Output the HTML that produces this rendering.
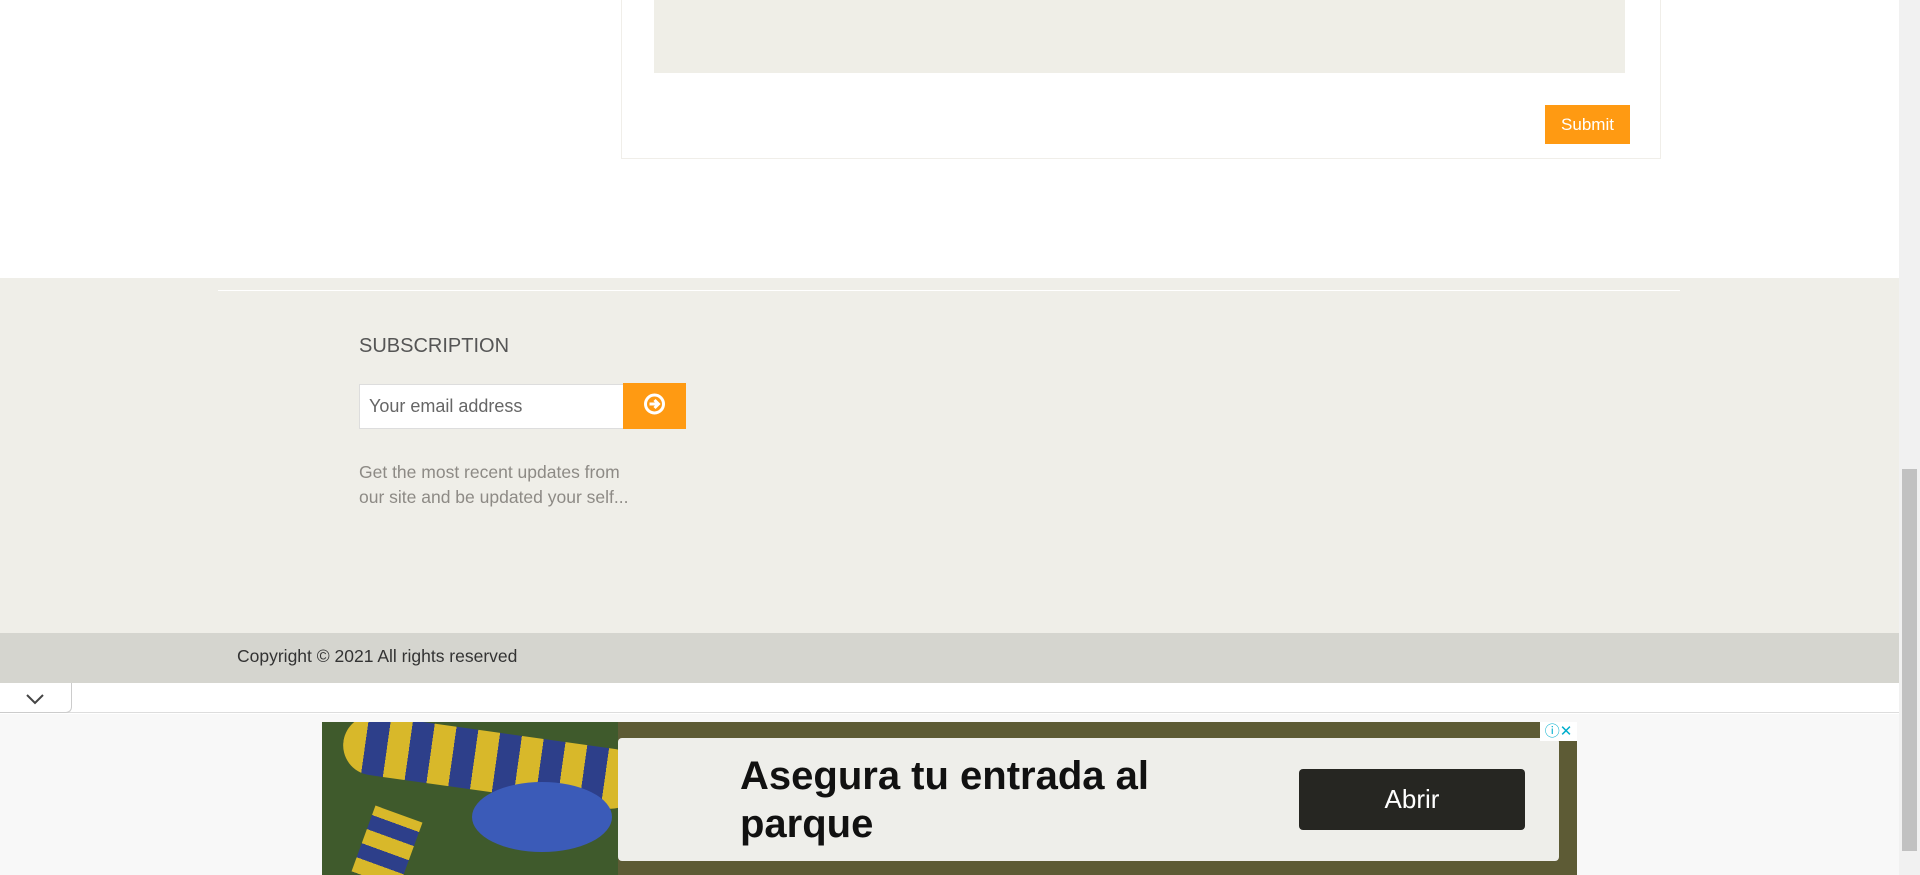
<!DOCTYPE html>
<html><head><meta charset="utf-8"><style>
*{margin:0;padding:0;box-sizing:border-box}
body{width:1920px;height:875px;overflow:hidden;background:#fff;font-family:"Liberation Sans",sans-serif;position:relative}
.a{position:absolute}
</style></head><body>
<div class="a" style="left:621px;top:-2px;width:1040px;height:161px;border:1px solid #f0eee9;background:#fff"></div>
<div class="a" style="left:654px;top:0;width:971px;height:73px;background:#efeee7"></div>
<div class="a" style="left:1545px;top:105px;width:85px;height:39px;background:#ff9a12;color:#fff;font-size:17px;line-height:39px;text-align:center">Submit</div>

<div class="a" style="left:0;top:278px;width:1899px;height:355px;background:#efeee8"></div>
<div class="a" style="left:218px;top:290px;width:1462px;height:1px;background:#fff"></div>
<div class="a" style="left:359px;top:335px;font-size:20px;color:#555;">SUBSCRIPTION</div>
<div class="a" style="left:359px;top:384px;width:265px;height:45px;background:#fff;border:1px solid #ddd;font-size:18px;color:#666;line-height:43px;padding-left:9px">Your email address</div>
<div class="a" style="left:623px;top:383px;width:63px;height:46px;background:#ff9a12">
<svg width="63" height="46" viewBox="0 0 63 46"><circle cx="31.5" cy="21" r="9" fill="none" stroke="#fff" stroke-width="3"/><path d="M26.5 21h8M31.5 17l4 4-4 4" fill="none" stroke="#fff" stroke-width="3"/></svg></div>
<div class="a" style="left:359px;top:460px;font-size:17.5px;line-height:25px;color:#8d8a85">Get the most recent updates from<br>our site and be updated your self...</div>

<div class="a" style="left:0;top:633px;width:1899px;height:50px;background:#d5d5cf"></div>
<div class="a" style="left:237px;top:646px;font-size:17.5px;color:#333">Copyright © 2021 All rights reserved</div>

<div class="a" style="left:0;top:683px;width:1899px;height:30px;background:#fff;border-bottom:1px solid #ddd"></div>
<div class="a" style="left:0;top:683px;width:72px;height:30px;background:#fff;border:1px solid #ccc;border-top:none;border-left:none;border-radius:0 0 6px 0"></div>
<svg class="a" style="left:24px;top:692px" width="22" height="14"><path d="M3 3l8 8 8-8" fill="none" stroke="#444" stroke-width="2"/></svg>
<div class="a" style="left:0;top:714px;width:1899px;height:161px;background:#f8f8f8"></div>

<div class="a" style="left:322px;top:722px;width:1255px;height:153px;background:#5d5b35"></div>
<div class="a" style="left:322px;top:722px;width:296px;height:153px;background:#3f5a2c;overflow:hidden">
<div class="a" style="left:20px;top:10px;width:300px;height:60px;background:repeating-linear-gradient(90deg,#d8b82a 0 22px,#2d3f8a 22px 44px);transform:rotate(8deg);border-radius:30px"></div>
<div class="a" style="left:150px;top:60px;width:140px;height:70px;background:#3b5bb8;border-radius:50%"></div>
<div class="a" style="left:40px;top:90px;width:50px;height:70px;background:repeating-linear-gradient(0deg,#d8b82a 0 15px,#2d3f8a 15px 30px);transform:rotate(20deg)"></div>
</div>
<div class="a" style="left:618px;top:738px;width:941px;height:123px;background:#eeeeea;border-radius:4px"></div>
<div class="a" style="left:740px;top:752px;font-size:40px;font-weight:bold;line-height:48px;color:#111">Asegura tu entrada al<br>parque</div>
<div class="a" style="left:1299px;top:769px;width:226px;height:61px;background:#262622;border-radius:4px;color:#fff;font-size:26px;line-height:61px;text-align:center">Abrir</div>
<div class="a" style="left:1540px;top:722px;width:37px;height:19px;background:#fff;color:#00aecd;font-size:15px;line-height:19px;text-align:center">ⓘ✕</div>

<div class="a" style="left:1899px;top:0;width:21px;height:875px;background:#f1f1f1"></div>
<div class="a" style="left:1902px;top:469px;width:15px;height:382px;background:#c1c1c1"></div>
</body></html>
